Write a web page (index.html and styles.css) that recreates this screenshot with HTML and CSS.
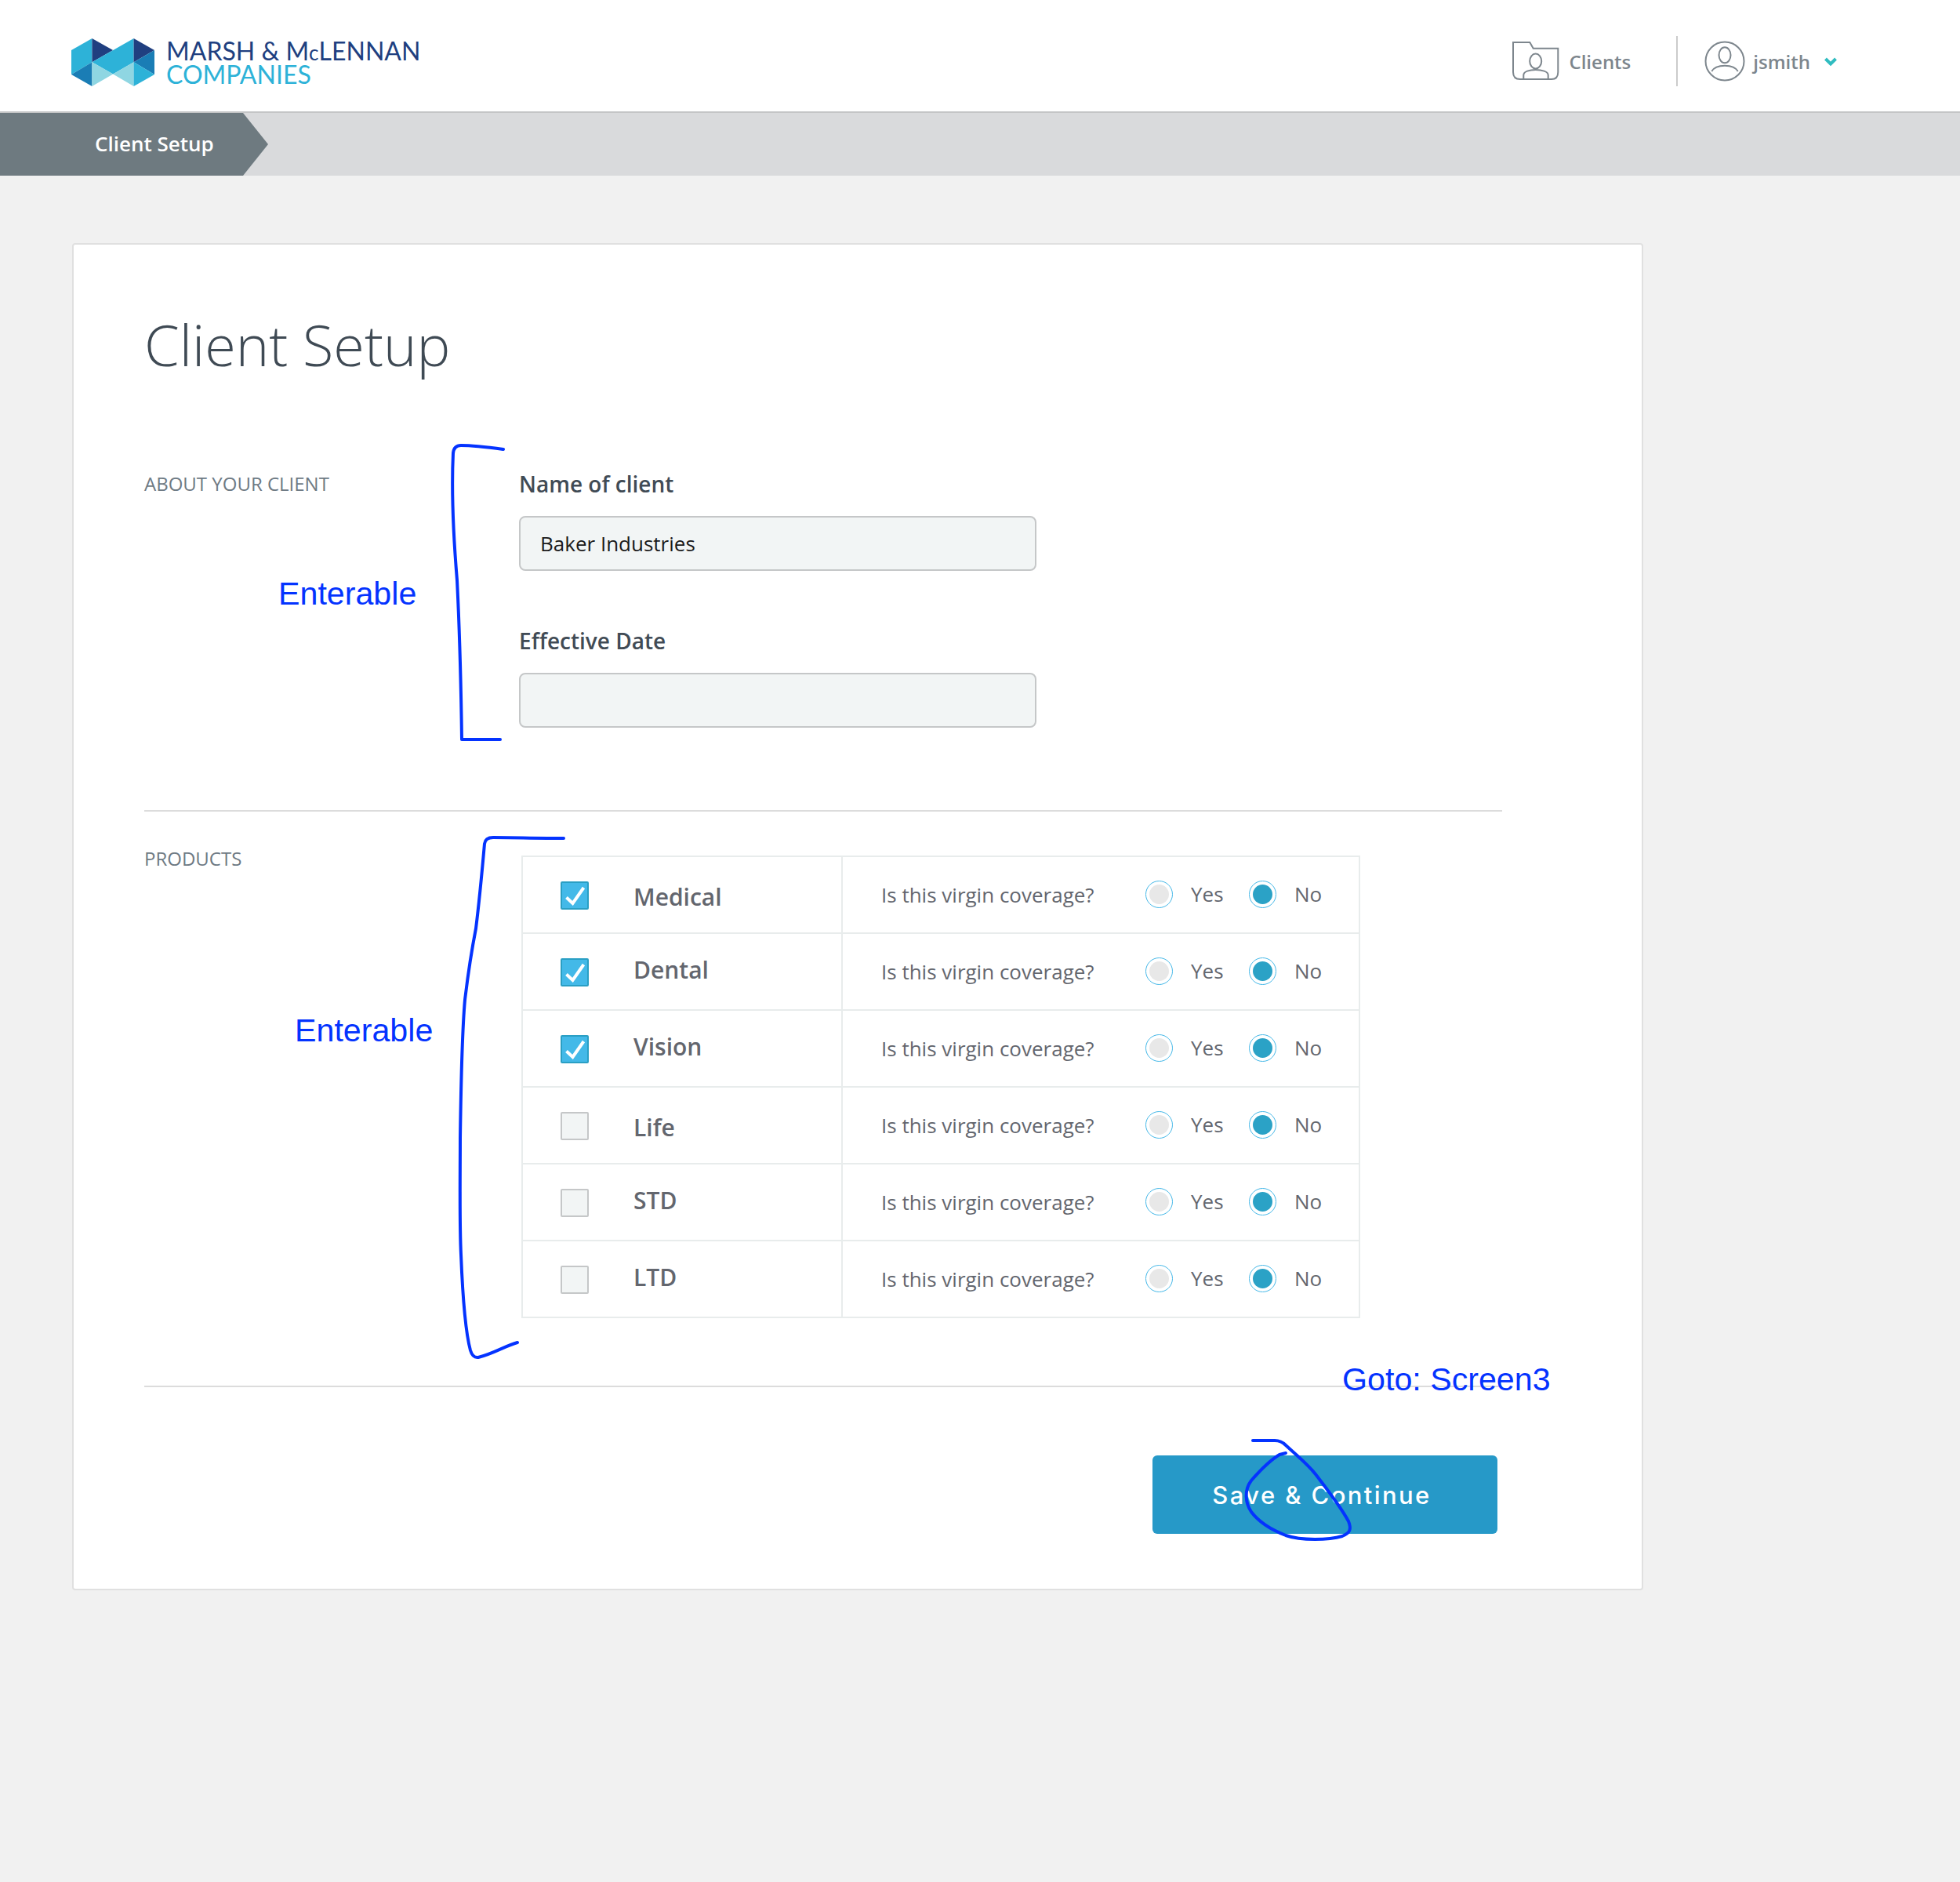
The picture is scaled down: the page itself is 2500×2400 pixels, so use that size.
FILE: index.html

```html
<!DOCTYPE html>
<html lang="en">
<head>
    <meta charset="UTF-8">
    <title>Client Setup</title>
    <link rel="stylesheet" href="styles.css">
</head>
<body>
    <header class="topbar">
        <div class="logo">
            <svg class="logo-mark" viewBox="93 88 317 182" width="106" height="61">
                <polygon fill="#2db2d8" points="93,133 172,88 172,178 93,225"/>
                <polygon fill="#203f80" points="172,88 252,133 172,178"/>
                <polygon fill="#2db2d8" points="172,178 331,88 331,178 252,224"/>
                <polygon fill="#203f80" points="331,88 410,133 331,178"/>
                <polygon fill="#1a7db5" points="93,225 172,178 172,270"/>
                <polygon fill="#8fd6e2" points="172,178 252,224 172,270"/>
                <polygon fill="#8fd6e2" points="331,178 331,270 252,224"/>
                <polygon fill="#1a7db5" points="331,178 410,133 410,225"/>
                <polygon fill="#2db2d8" points="331,178 410,225 331,270"/>
            </svg>
            <div class="logo-text">
                <div class="logo-name">MARSH &amp; M<span class="logo-c">c</span>LENNAN</div>
                <div class="logo-sub">COMPANIES</div>
            </div>
        </div>
        <nav class="nav">
            <svg class="nav-folder" viewBox="0 0 60 50" width="60" height="50" fill="none" stroke="#7d868d" stroke-width="2">
                <path d="M1 1H22.3L26.7 8.7H58.3V39Q58.3 48 50 48H10Q1 48 1 39Z"/>
                <ellipse cx="29.7" cy="25" rx="7.5" ry="9.5"/>
                <path d="M14.3 48V42.7C14.3 38 22 36 29.7 36S45.7 38 45.7 42.7V48"/>
            </svg>
            <span class="nav-text">Clients</span>
            <span class="nav-sep"></span>
            <svg class="nav-user" viewBox="0 0 52 52" width="52" height="52" fill="none" stroke="#7d868d" stroke-width="2">
                <circle cx="26" cy="26" r="24.5"/>
                <ellipse cx="26" cy="18.3" rx="7.5" ry="10"/>
                <path d="M9.3 39C12 34 19 31.7 26 31.7S40 34 42.7 39"/>
            </svg>
            <span class="nav-text">jsmith</span>
            <svg class="nav-caret" viewBox="0 0 16 13" width="16" height="13" fill="none" stroke="#2fbcc0" stroke-width="4">
                <path d="M1.5 3L8 9.5L14.5 3"/>
            </svg>
        </nav>
    </header>

    <div class="crumbs">
        <div class="crumb">Client Setup</div>
    </div>

    <main class="main">
        <div class="card">
            <h1>Client Setup</h1>

            <section class="section about">
                <div class="section-label">ABOUT YOUR CLIENT</div>
                <div class="fields">
                    <label class="field-label">Name of client</label>
                    <div class="input">Baker Industries</div>
                    <label class="field-label second">Effective Date</label>
                    <div class="input"></div>
                </div>
            </section>

            <section class="section products">
                <div class="section-label products-label">PRODUCTS</div>
                <div class="table">
                    <div class="row">
                        <div class="cell-name"><span class="check on"><svg viewBox="0 0 32 32" width="32" height="32"><path d="M5.5 18.5L13.5 26L27.5 6"/></svg></span><span class="name low">Medical</span></div>
                        <div class="cell-question"><span class="question">Is this virgin coverage?</span><span class="option"><span class="radio"></span>Yes</span><span class="option"><span class="radio on"></span>No</span></div>
                    </div>
                    <div class="row">
                        <div class="cell-name"><span class="check on"><svg viewBox="0 0 32 32" width="32" height="32"><path d="M5.5 18.5L13.5 26L27.5 6"/></svg></span><span class="name">Dental</span></div>
                        <div class="cell-question"><span class="question">Is this virgin coverage?</span><span class="option"><span class="radio"></span>Yes</span><span class="option"><span class="radio on"></span>No</span></div>
                    </div>
                    <div class="row">
                        <div class="cell-name"><span class="check on"><svg viewBox="0 0 32 32" width="32" height="32"><path d="M5.5 18.5L13.5 26L27.5 6"/></svg></span><span class="name">Vision</span></div>
                        <div class="cell-question"><span class="question">Is this virgin coverage?</span><span class="option"><span class="radio"></span>Yes</span><span class="option"><span class="radio on"></span>No</span></div>
                    </div>
                    <div class="row">
                        <div class="cell-name"><span class="check"></span><span class="name low">Life</span></div>
                        <div class="cell-question"><span class="question">Is this virgin coverage?</span><span class="option"><span class="radio"></span>Yes</span><span class="option"><span class="radio on"></span>No</span></div>
                    </div>
                    <div class="row">
                        <div class="cell-name"><span class="check"></span><span class="name">STD</span></div>
                        <div class="cell-question"><span class="question">Is this virgin coverage?</span><span class="option"><span class="radio"></span>Yes</span><span class="option"><span class="radio on"></span>No</span></div>
                    </div>
                    <div class="row">
                        <div class="cell-name"><span class="check"></span><span class="name">LTD</span></div>
                        <div class="cell-question"><span class="question">Is this virgin coverage?</span><span class="option"><span class="radio"></span>Yes</span><span class="option"><span class="radio on"></span>No</span></div>
                    </div>
                </div>
            </section>

            <div class="actions">
                <button class="save">Save &amp; Continue</button>
            </div>
        </div>
    </main>

    <!-- hand drawn notes on top of the mockup -->
    <div class="note note-about">Enterable</div>
    <div class="note note-products">Enterable</div>
    <div class="note note-goto">Goto: Screen3</div>
    <svg class="ink" viewBox="0 0 2500 2400" width="2500" height="2400" fill="none" stroke="#0433ff" stroke-width="4" stroke-linecap="round" stroke-linejoin="round">
        <path d="M642 573C620 570 600 568 588 568Q579 568 578 578C576 620 578 680 583 740C586 800 588 873 589 943H638"/>
        <path d="M719 1069C690 1069 650 1068 629 1068Q619 1068 618 1076C615 1110 610 1160 607 1184C600 1220 596 1250 593 1275C589 1320 588 1380 587 1452C587 1500 586 1560 588 1600C590 1650 594 1700 600 1722Q603 1732 610 1731C630 1726 645 1716 660 1712"/>
        <path d="M1598 1837H1626Q1634 1837 1640 1843C1655 1857 1668 1867 1678 1880C1695 1902 1712 1925 1720 1940C1724 1950 1722 1955 1712 1959C1695 1964 1660 1965 1640 1958C1622 1951 1605 1940 1596 1928C1588 1916 1587 1900 1596 1888C1610 1872 1622 1861 1632 1855L1640 1853"/>
    </svg>
</body>
</html>
```

FILE: styles.css

```css
body {
    margin: 0;
    min-height: 2400px;
    position: relative;
    overflow: hidden;
    background: #f1f1f1;
    font-family: "Open Sans", sans-serif;
    color: #63666e;
}

/* top bar */
.topbar {
    height: 142px;
    background: #fff;
    border-bottom: 2px solid #c4c5c6;
    display: flex;
    justify-content: space-between;
}
.logo {
    display: flex;
    gap: 15px;
    padding: 49px 0 0 91px;
}
.logo-mark {
    display: block;
}
.logo-text {
    font-family: Lato, sans-serif;
    font-size: 32px;
    line-height: 29px;
    margin-top: 1px;
}
.logo-name {
    color: #203f80;
}
.logo-c {
    font-size: 26px;
}
.logo-sub {
    color: #2db2d8;
    margin-top: -2px;
}
.nav {
    display: flex;
    align-items: center;
    height: 50px;
    padding: 53px 157px 0 0;
}
.nav-text {
    font-size: 24px;
    font-weight: 600;
    color: #7d868d;
}
.nav-folder {
    margin-right: 12px;
}
.nav-sep {
    width: 2px;
    height: 64px;
    background: #cbcbcb;
    margin: 0 34px 0 58px;
}
.nav-user {
    margin-right: 10px;
}
.nav-caret {
    margin-left: 18px;
}

/* breadcrumb */
.crumbs {
    height: 80px;
    background: #d9dadc;
}
.crumb {
    width: 221px;
    height: 80px;
    padding-left: 121px;
    background: #6e7a80;
    color: #fff;
    font-size: 26px;
    font-weight: 600;
    line-height: 78px;
    clip-path: polygon(0 0, 310px 0, 342px 50%, 310px 100%, 0 100%);
}

/* card */
.main {
    padding: 86px 0 0 92px;
}
.card {
    width: 2004px;
    height: 1718px;
    box-sizing: border-box;
    background: #fff;
    border: 2px solid #e0e0e0;
    border-radius: 4px;
    padding: 77px 0 0 90px;
}
h1 {
    margin: 0;
    font-size: 72px;
    font-weight: 300;
    line-height: 100px;
    color: #3f4a54;
}
.section {
    width: 1732px;
    display: flex;
    box-sizing: border-box;
    border-bottom: 2px solid #dcdcdc;
}
.about {
    margin-top: 110px;
    height: 436px;
}
.section-label {
    width: 236px;
    font-size: 24px;
    line-height: 36px;
    color: #6e7a84;
    white-space: nowrap;
}
.fields {
    margin-left: 242px;
    width: 660px;
}
.field-label {
    display: block;
    font-size: 28px;
    font-weight: 600;
    line-height: 36px;
    color: #414b55;
    margin-bottom: 23px;
}
.field-label.second {
    margin-top: 71px;
}
.input {
    height: 70px;
    box-sizing: border-box;
    background: #f2f5f5;
    border: 2px solid #c5c7c8;
    border-radius: 8px;
    padding-left: 25px;
    font-size: 26px;
    line-height: 66px;
    color: #1b1b1b;
}

/* products */
.products {
    padding-top: 42px;
    height: 734px;
}
.table {
    margin-left: 245px;
    margin-top: 14px;
    width: 1070px;
    height: 590px;
    box-sizing: border-box;
    border: 2px solid #e8ecec;
    border-bottom: none;
}
.row {
    height: 98px;
    box-sizing: border-box;
    display: flex;
    border-bottom: 2px solid #e8ecec;
}
.cell-name {
    width: 406px;
    display: flex;
    align-items: center;
    padding-left: 48px;
    box-sizing: border-box;
}
.check {
    width: 36px;
    height: 36px;
    box-sizing: border-box;
    background: #f2f5f5;
    border: 2px solid #c5c7c8;
    border-radius: 2px;
    margin-top: 2px;
}
.check.on {
    background: #43b9e8;
    border: 2px solid #2a9fc4;
}
.check svg {
    display: block;
}
.check svg path {
    fill: none;
    stroke: #fff;
    stroke-width: 4;
}
.name {
    margin-left: 57px;
    font-size: 30px;
    font-weight: 600;
    line-height: 40px;
    margin-bottom: 4px;
}
.name.low {
    margin-bottom: 0;
    margin-top: 5px;
}
.cell-question {
    flex: 1;
    display: flex;
    align-items: center;
    padding-left: 49px;
    border-left: 2px solid #e8ecec;
    font-size: 26px;
}
.question {
    width: 337px;
}
.option {
    width: 132px;
    display: flex;
    align-items: center;
    margin-bottom: 2px;
}
.radio {
    width: 35px;
    height: 35px;
    box-sizing: border-box;
    border: 1.5px solid #45b8e8;
    border-radius: 50%;
    padding: 4px;
    background: #e8e8e8 content-box;
    margin-right: 23px;
}
.radio.on {
    background: #2ba2c6 content-box;
}

/* footer button */
.actions {
    width: 1726px;
    display: flex;
    justify-content: flex-end;
    padding-top: 87px;
}
.save {
    width: 440px;
    height: 100px;
    border: none;
    border-radius: 6px;
    background: #2699c8;
    color: #fff;
    font-family: Inter, sans-serif;
    font-size: 31px;
    font-weight: 500;
    letter-spacing: 2.4px;
    padding: 0 8px 0 0;
}

/* annotations */
.note {
    position: absolute;
    font-family: "Liberation Sans", Arial, sans-serif;
    font-size: 41.2px;
    line-height: 50px;
    color: #0433ff;
    white-space: nowrap;
}
.note-about {
    left: 355px;
    top: 732px;
}
.note-products {
    left: 376px;
    top: 1289px;
}
.note-goto {
    left: 1712px;
    top: 1734px;
}
.ink {
    position: absolute;
    left: 0;
    top: 0;
    pointer-events: none;
}
```
